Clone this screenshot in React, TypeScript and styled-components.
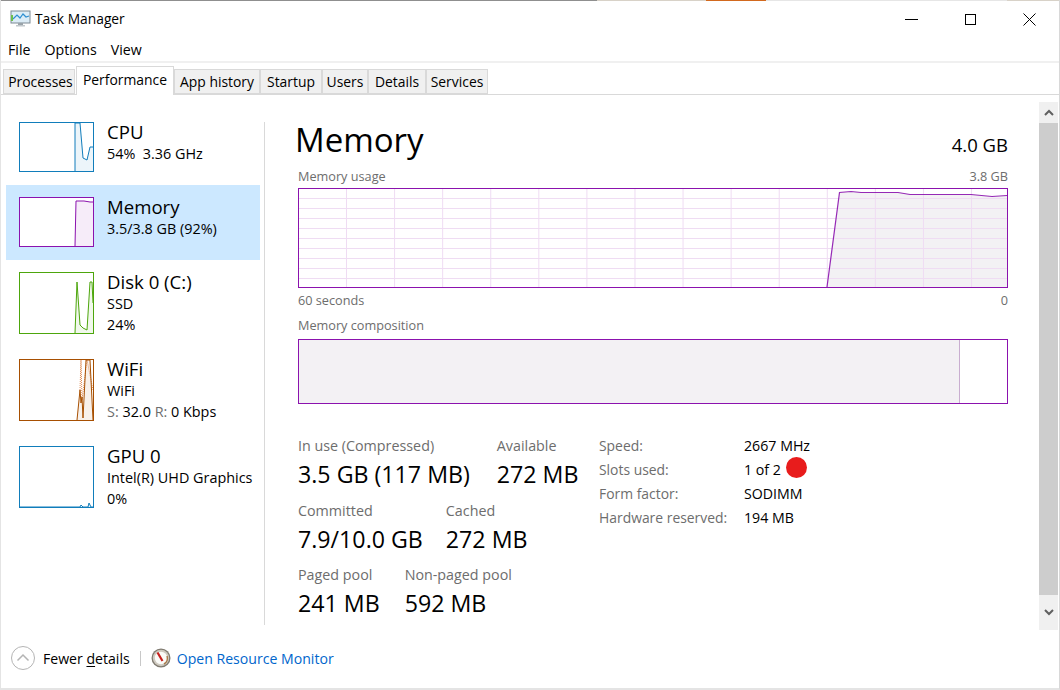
import styled, { createGlobalStyle } from 'styled-components'

const GlobalStyle = createGlobalStyle`
  html, body { margin: 0; padding: 0; background: #fff; }
  * { box-sizing: border-box; }
`

const FONT = '"Open Sans", "Noto Sans", sans-serif'

// data for the left list
type PerfItem = {
  name: string
  lines: React.ReactNode[]
  color: string
  height: number
  itemHeight: number
  active?: boolean
  line: string
  dotted?: string
}

const Frame = styled.div`
  position: relative;
  width: 1060px;
  height: 690px;
  overflow: hidden;
  display: flex;
  flex-direction: column;
  background: #fff;
  border-left: 1px solid #e4e4e4;
  border-right: 1px solid #d8d8d8;
  border-bottom: 2px solid #e4e4e4;
  font-family: ${FONT};
  color: #000;
`
// bits of the desktop showing behind the window edge
const TopEdge = styled.div`
  height: 1px;
  flex: none;
  background: linear-gradient(
    to right,
    #8f8f8f 0,
    #8f8f8f 596px,
    #d8d2c8 596px,
    #d8d2c8 705px,
    #d2691e 705px,
    #d2691e 765px,
    #e6e6e6 765px,
    #e6e6e6 1006px,
    #d8d2c8 1006px
  );
`
const LeftEdge = styled.div`
  position: absolute;
  left: -1px;
  top: 0;
  width: 1px;
  height: 690px;
  background: linear-gradient(
    to bottom,
    #e4e4e4 0,
    #e4e4e4 22px,
    #c4ccd6 22px,
    #c4ccd6 42px,
    #e04040 42px,
    #e04040 48px,
    #c4ccd6 48px,
    #c4ccd6 70px,
    #e8e8e8 70px,
    #e8e8e8 157px,
    #222 157px,
    #222 202px,
    #e8e8e8 202px,
    #e8e8e8 313px,
    #222 313px,
    #222 332px,
    #e8e8e8 332px,
    #e8e8e8 336px,
    #222 336px,
    #222 363px,
    #e8e8e8 363px,
    #e8e8e8 388px,
    #777 388px,
    #777 400px,
    #e8e8e8 400px
  );
`
const TitleBar = styled.div`
  height: 35px;
  flex: none;
  display: flex;
  align-items: center;
  padding-left: 9px;
  font-size: 13.8px;
`
const TitleText = styled.span`
  margin-left: 4px;
  flex: 1;
`
const WinButtons = styled.div`
  display: flex;
  align-items: center;
  gap: 46px;
  padding: 1px 23px 0 0;
`
const MenuBar = styled.div`
  height: 27px;
  flex: none;
  display: flex;
  align-items: center;
  padding: 1px 0 0 7px;
  gap: 14px;
  font-size: 14.2px;
  border-bottom: 2px solid #f0f0f0;
`
const TabBar = styled.div`
  height: 32px;
  flex: none;
  display: flex;
  align-items: flex-end;
  padding-left: 2px;
  border-bottom: 1px solid #d9d9d9;
`
const Tab = styled.div<{ $w: number; $active?: boolean; $indent?: number }>`
  width: ${p => p.$w}px;
  height: ${p => (p.$active ? 29 : 25)}px;
  margin-bottom: ${p => (p.$active ? -1 : 0)}px;
  padding-top: ${p => (p.$active ? 3 : 2)}px;
  padding-left: ${p => p.$indent ?? 0}px;
  display: flex;
  justify-content: center;
  font-size: 13.9px;
  white-space: nowrap;
  background: ${p => (p.$active ? '#fff' : '#f0f0f0')};
  border: 1px solid #d9d9d9;
  border-bottom: ${p => (p.$active ? 'none' : '1px solid #d9d9d9')};
  margin-left: ${p => (p.$active ? 1 : 0)}px;
  position: relative;
`
const Body = styled.div`
  flex: 1;
  display: flex;
  min-height: 0;
  padding: 7px 1px 0 5px;
`
const Sidebar = styled.div`
  width: 254px;
  flex: none;
  padding-top: 8px;
`
const SideItem = styled.div<{ $h: number; $active?: boolean }>`
  height: ${p => p.$h}px;
  display: flex;
  align-items: flex-start;
  padding: 12px 0 0 13px;
  background: ${p => (p.$active ? '#cce8ff' : 'transparent')};
`
const Thumb = styled.svg<{ $color: string; $h: number }>`
  width: 75px;
  height: ${p => p.$h}px;
  flex: none;
  background: #fff;
  border: 1px solid ${p => p.$color};
`
const SideText = styled.div`
  margin-left: 13px;
  margin-top: -3px;
`
const SideName = styled.div`
  font-size: 18.6px;
  line-height: 25px;
`
const SideLine = styled.div`
  font-size: 14.4px;
  line-height: 20.5px;
  white-space: pre;
`
const Dim = styled.span`
  color: #6d6d6d;
`
const Divider = styled.div`
  width: 1px;
  flex: none;
  margin: 20px 0 0 4px;
  height: 503px;
  background: #d9d9d9;
`
const Main = styled.div`
  width: 710px;
  flex: none;
  margin-left: 33px;
  display: flex;
  flex-direction: column;
`
const HeadRow = styled.div`
  height: 66px;
  padding-top: 14px;
  display: flex;
  justify-content: space-between;
  align-items: baseline;
`
const Heading = styled.div`
  font-size: 33px;
  line-height: 48px;
  margin-left: -3px;
`
const Capacity = styled.div`
  font-size: 18.5px;
`
const CaptionRow = styled.div`
  display: flex;
  justify-content: space-between;
  font-size: 12.7px;
  line-height: 17px;
  color: #6d6d6d;
`
const Chart = styled.svg`
  display: block;
  width: 710px;
  height: 100px;
  margin-top: 3px;
  border: 1px solid #8b12ae;
  background: #fff;
`
const AxisRow = styled(CaptionRow)`
  margin-top: 4px;
`
const CompTitle = styled(CaptionRow)`
  margin-top: 8px;
`
const Composition = styled.div`
  width: 710px;
  height: 65px;
  margin-top: 5px;
  border: 1px solid #8b12ae;
  background: #fff;
`
const CompUsed = styled.div`
  width: 661px;
  height: 100%;
  background: #f3f1f4;
  border-right: 1px solid #c9aed0;
`
const StatsArea = styled.div`
  margin-top: 32px;
  display: flex;
`
const StatsLeft = styled.div`
  width: 301px;
  flex: none;
  display: flex;
  flex-direction: column;
  gap: 8.5px;
`
const StatRow = styled.div<{ $gap: number }>`
  display: flex;
  gap: ${p => p.$gap}px;
`
const Stat = styled.div``
const StatLabel = styled.div`
  font-size: 14.3px;
  line-height: 20px;
  color: #6d6d6d;
  white-space: nowrap;
`
const StatValue = styled.div`
  font-size: 23.2px;
  line-height: 36px;
  white-space: nowrap;
`
const Specs = styled.div`
  display: grid;
  grid-template-columns: 145px auto;
  grid-auto-rows: 24px;
  font-size: 13.9px;
  line-height: 19px;
  align-items: start;
`
const SpecLabel = styled.div`
  color: #6d6d6d;
  white-space: nowrap;
`
const SpecValue = styled.div`
  display: flex;
  align-items: flex-start;
  font-size: 14.2px;
  white-space: nowrap;
`
const RedDot = styled.span`
  width: 21px;
  height: 21px;
  border-radius: 50%;
  background: #e81c1c;
  margin: -3px 0 0 5px;
`
const Scrollbar = styled.div`
  width: 19px;
  flex: none;
  margin-left: 31px;
  height: 528px;
  display: flex;
  flex-direction: column;
`
const ScrollBtn = styled.div<{ $h: number }>`
  height: ${p => p.$h}px;
  flex: none;
  background: #f0f0f0;
  display: flex;
  align-items: center;
  justify-content: center;
`
const ScrollThumb = styled.div`
  flex: 1;
  background: #cdcdcd;
`
const Footer = styled.div`
  height: 60px;
  flex: none;
  display: flex;
  align-items: center;
  padding: 0 0 0 10px;
  font-size: 14.1px;
`
const FooterText = styled.span`
  padding-top: 1px;
`
const FewerText = styled(FooterText)`
  margin-left: 8px;
  & u { text-underline-offset: 2px; }
`
const FooterSep = styled.span`
  width: 1px;
  height: 15px;
  background: #c8c8c8;
  margin: 0 10px 0 10px;
`
const MonitorLink = styled(FooterText)`
  color: #0066cc;
  margin-left: 6px;
`

const items: PerfItem[] = [
  {
    name: 'CPU',
    lines: ['54%  3.36 GHz'],
    color: '#117dbb',
    height: 50,
    itemHeight: 75,
    line: '55,48 55,0 60,0 63,35 67,37 70,24 73,24',
  },
  {
    name: 'Memory',
    lines: ['3.5/3.8 GB (92%)'],
    color: '#8b12ae',
    height: 50,
    itemHeight: 75,
    active: true,
    line: '55,48 56,3 64,3 70,4 73,4',
  },
  {
    name: 'Disk 0 (C:)',
    lines: ['SSD', '24%'],
    color: '#4da60c',
    height: 62,
    itemHeight: 87,
    line: '55,60 57,9 60,52 63,55 67,57 70,9 72,9 73,30',
  },
  {
    name: 'WiFi',
    lines: [
      'WiFi',
      <>
        <Dim>S:</Dim> 32.0 <Dim>R:</Dim> 0 Kbps
      </>,
    ],
    color: '#a74f01',
    height: 62,
    itemHeight: 87,
    line: '57,60 60,30 61,43 62,37 63,58 66,0 70,0 73,60',
    dotted: '60,30 61,0 62,40 67,0 73,30',
  },
  {
    name: 'GPU 0',
    lines: ['Intel(R) UHD Graphics', '0%'],
    color: '#117dbb',
    height: 62,
    itemHeight: 87,
    line: '0,60 60,60 61,58 63,60 68,60 69,56 71,60 73,60',
  },
]

const tabs = [
  { label: 'Processes', w: 72, indent: 3 },
  { label: 'Performance', w: 98, active: true },
  { label: 'App history', w: 86 },
  { label: 'Startup', w: 62 },
  { label: 'Users', w: 46 },
  { label: 'Details', w: 58 },
  { label: 'Services', w: 62 },
]

const appIcon = (
  <svg width="21" height="18" viewBox="0 0 21 18">
    <rect x="1" y="1" width="19" height="12" fill="#dcecf6" stroke="#7c8a94" />
    <path d="M3 9l4-4 3 3 3-4 3 3 3-1" fill="none" stroke="#2e8fd0" strokeWidth="1.2" />
    <rect x="1" y="5" width="2" height="6" fill="#6cc04a" />
    <rect x="8" y="13" width="5" height="2" fill="#9aa3a9" />
    <rect x="6" y="15" width="9" height="1.5" fill="#c2c8cc" />
  </svg>
)

const gaugeIcon = (
  <svg width="20" height="20" viewBox="0 0 20 20">
    <circle cx="10" cy="10" r="9.5" fill="#7f7a70" />
    <circle cx="10" cy="10" r="8.2" fill="#cfcac0" />
    <circle cx="10" cy="10" r="6.2" fill="#fbfbf8" />
    <path d="M6.500 4.500l5 8.500" stroke="#c8201e" strokeWidth="2.200" />
    <path d="M16 8a6.500 6.500 0 0 1-3 8" fill="none" stroke="#a87a4a" strokeWidth="1.500" />
  </svg>
)

function Sparkline({ item }: { item: PerfItem }) {
  const w = 73
  const h = item.height - 2
  const pts = item.line.split(' ')
  const startX = pts[0].split(',')[0]
  const fill = `${item.line} 73,${h} ${startX},${h}`
  return (
    <Thumb $color={item.color} $h={item.height} viewBox={`0 0 ${w} ${h}`} preserveAspectRatio="none">
      <polygon points={fill} fill={item.color} fillOpacity={0.08} />
      {item.dotted && (
        <polyline points={item.dotted} fill="none" stroke="#e08a50" strokeWidth={1} strokeDasharray="1 1" />
      )}
      <polyline points={item.line} fill="none" stroke={item.color} strokeWidth={1} />
    </Thumb>
  )
}

function UsageChart() {
  const vLines = Array.from({ length: 14 }, (_, i) => 47.5 + i * 48.08)
  const hLines = Array.from({ length: 9 }, (_, i) => 9.5 + i * 10)
  const shape = '528,98 540.5,3.5 552,2.5 562,3.5 599,3.5 611,5.5 672,5.5 693,7.5 708,6.5'
  return (
    <Chart viewBox="0 0 708 98">
      <polygon points={`${shape} 708,98`} fill="#f3f1f4" />
      {hLines.map(y => (
        <line key={y} x1={0} x2={708} y1={y} y2={y} stroke="#efdcf3" />
      ))}
      {vLines.map(x => (
        <line key={x} x1={x} x2={x} y1={0} y2={98} stroke="#efdcf3" />
      ))}
      <polyline points={shape} fill="none" stroke="#8b12ae" strokeOpacity={0.9} strokeWidth={1.2} />
    </Chart>
  )
}

export default function App() {
  return (
    <>
      <GlobalStyle />
      <Frame>
        <LeftEdge />
        <TopEdge />
        <TitleBar>
          {appIcon}
          <TitleText>Task Manager</TitleText>
          <WinButtons>
            <svg width="13" height="13" viewBox="0 0 13 13">
              <path d="M0 6.5h13" stroke="#000" fill="none" />
            </svg>
            <svg width="13" height="13" viewBox="0 0 13 13">
              <rect x="1.5" y="1.5" width="10" height="10" stroke="#000" fill="none" />
            </svg>
            <svg width="13" height="13" viewBox="0 0 13 13">
              <path d="M.5.5l12 12M12.5.5l-12 12" stroke="#000" fill="none" />
            </svg>
          </WinButtons>
        </TitleBar>
        <MenuBar>
          <span>File</span>
          <span>Options</span>
          <span>View</span>
        </MenuBar>
        <TabBar>
          {tabs.map(t => (
            <Tab key={t.label} $w={t.w} $active={t.active} $indent={t.indent}>
              {t.label}
            </Tab>
          ))}
        </TabBar>
        <Body>
          <Sidebar>
            {items.map(item => (
              <SideItem key={item.name} $h={item.itemHeight} $active={item.active}>
                <Sparkline item={item} />
                <SideText>
                  <SideName>{item.name}</SideName>
                  {item.lines.map((l, i) => (
                    <SideLine key={i}>{l}</SideLine>
                  ))}
                </SideText>
              </SideItem>
            ))}
          </Sidebar>
          <Divider />
          <Main>
            <HeadRow>
              <Heading>Memory</Heading>
              <Capacity>4.0 GB</Capacity>
            </HeadRow>
            <CaptionRow>
              <span>Memory usage</span>
              <span>3.8 GB</span>
            </CaptionRow>
            <UsageChart />
            <AxisRow>
              <span>60 seconds</span>
              <span>0</span>
            </AxisRow>
            <CompTitle>
              <span>Memory composition</span>
            </CompTitle>
            <Composition>
              <CompUsed />
            </Composition>
            <StatsArea>
              <StatsLeft>
                <StatRow $gap={27}>
                  <Stat>
                    <StatLabel>In use (Compressed)</StatLabel>
                    <StatValue>3.5 GB (117 MB)</StatValue>
                  </Stat>
                  <Stat>
                    <StatLabel>Available</StatLabel>
                    <StatValue>272 MB</StatValue>
                  </Stat>
                </StatRow>
                <StatRow $gap={23}>
                  <Stat>
                    <StatLabel>Committed</StatLabel>
                    <StatValue>7.9/10.0 GB</StatValue>
                  </Stat>
                  <Stat>
                    <StatLabel>Cached</StatLabel>
                    <StatValue>272 MB</StatValue>
                  </Stat>
                </StatRow>
                <StatRow $gap={25}>
                  <Stat>
                    <StatLabel>Paged pool</StatLabel>
                    <StatValue>241 MB</StatValue>
                  </Stat>
                  <Stat>
                    <StatLabel>Non-paged pool</StatLabel>
                    <StatValue>592 MB</StatValue>
                  </Stat>
                </StatRow>
              </StatsLeft>
              <Specs>
                <SpecLabel>Speed:</SpecLabel>
                <SpecValue>2667 MHz</SpecValue>
                <SpecLabel>Slots used:</SpecLabel>
                <SpecValue>
                  1 of 2<RedDot />
                </SpecValue>
                <SpecLabel>Form factor:</SpecLabel>
                <SpecValue>SODIMM</SpecValue>
                <SpecLabel>Hardware reserved:</SpecLabel>
                <SpecValue>194 MB</SpecValue>
              </Specs>
            </StatsArea>
          </Main>
          <Scrollbar>
            <ScrollBtn $h={21}>
              <svg width="10" height="7" viewBox="0 0 10 7">
                <path d="M1 6l4-4 4 4" fill="none" stroke="#606060" strokeWidth="2" />
              </svg>
            </ScrollBtn>
            <ScrollThumb />
            <ScrollBtn $h={35}>
              <svg width="10" height="7" viewBox="0 0 10 7">
                <path d="M1 1l4 4 4-4" fill="none" stroke="#606060" strokeWidth="2" />
              </svg>
            </ScrollBtn>
          </Scrollbar>
        </Body>
        <Footer>
          <svg width="24" height="24" viewBox="0 0 24 24">
            <circle cx="12" cy="12" r="11.5" fill="#fff" stroke="#b4b4b4" />
            <path d="M6.5 14.5L12 9l5.500 5.500" fill="none" stroke="#b4b4b4" strokeWidth="1.500" />
          </svg>
          <FewerText>
            Fewer <u>d</u>etails
          </FewerText>
          <FooterSep />
          {gaugeIcon}
          <MonitorLink>Open Resource Monitor</MonitorLink>
        </Footer>
      </Frame>
    </>
  )
}
